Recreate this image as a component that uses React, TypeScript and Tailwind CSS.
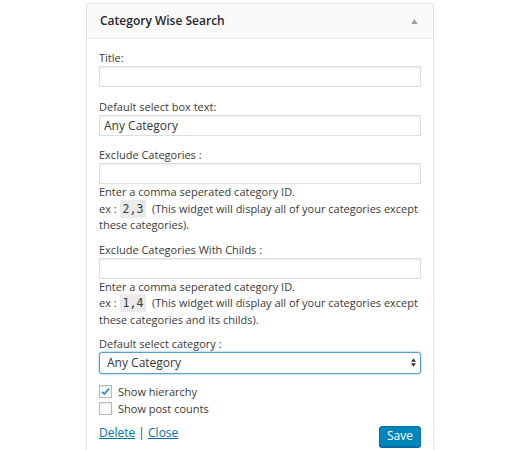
import { useState } from "react";

const font = { fontFamily: '"Open Sans", "Noto Sans", sans-serif' };

function Field({ label, value }: { label: string; value?: string }) {
  return (
    <div>
      <label className="block leading-[17px]">{label}</label>
      <input
        type="text"
        defaultValue={value}
        className="block w-full h-[21px] border border-[#ddd] bg-white px-[4px] text-[12px] text-[#32373c] shadow-[inset_0_1px_2px_rgba(0,0,0,0.07)] outline-none"
      />
    </div>
  );
}

function Help({ example, tail }: { example: string; tail: string }) {
  return (
    <p className="leading-[16.5px]">
      Enter a comma seperated category ID.
      <br />
      ex :{" "}
      <code className="bg-[#eaeaea] px-[3px] py-[2px] leading-none text-[11.5px] font-['DejaVu_Sans_Mono',monospace]">{example}</code>
      &nbsp; (This widget will display all of your categories except {tail}
    </p>
  );
}

function Checkbox({ checked, onChange, label }: { checked: boolean; onChange: () => void; label: string }) {
  return (
    <label className="flex items-center gap-[6px] leading-[17px] cursor-pointer" onClick={onChange}>
      <span className="flex items-center justify-center w-[13px] h-[13px] border border-[#b4b9be] bg-white shadow-[inset_0_1px_2px_rgba(0,0,0,0.1)]">
        {checked && (
          <svg viewBox="0 0 12 12" className="w-[11px] h-[11px]">
            <path d="M2.2 6.4 L4.8 8.8 L9.8 2.8" fill="none" stroke="#1e8cbe" strokeWidth="1.9" />
          </svg>
        )}
      </span>
      {label}
    </label>
  );
}

export default function App() {
  const [hierarchy, setHierarchy] = useState(true);
  const [counts, setCounts] = useState(false);

  return (
    <div className="min-h-[450px] bg-white pt-[3px]" style={font}>
      <div className="mx-auto w-[348px] border border-[#e5e5e5] bg-white shadow-[0_1px_1px_rgba(0,0,0,0.04)] text-[11px] leading-[16.5px] text-[#3a3a3a]">
        {/* Header */}
        <div className="flex items-center justify-between h-[35px] px-[13px] bg-[#fafafa] border-b border-[#eee]">
          <span className="text-[12px] font-semibold text-[#23282d]">Category Wise Search</span>
          <svg viewBox="0 0 8 6" className="w-[7px] h-[5px] mr-[2px]">
            <path d="M0 6 L4 0 L8 6 Z" fill="#a0a5aa" />
          </svg>
        </div>

        {/* Form */}
        <div className="px-[12px] pt-[10px] pb-[12px]">
          <Field label="Title:" />
          <div className="mt-[11px]">
            <Field label="Default select box text:" value="Any Category" />
          </div>
          <div className="mt-[10px]">
            <Field label="Exclude Categories :" />
            <Help example="2,3" tail="these categories)." />
          </div>
          <div className="mt-[7px]">
            <Field label="Exclude Categories With Childs :" />
            <Help example="1,4" tail="these categories and its childs)." />
          </div>
          <div className="mt-[7px]">
            <label className="block leading-[17px]">Default select category :</label>
            <div className="relative">
              <select className="block w-full h-[22px] appearance-none rounded-[3px] border border-[#5b9dd9] bg-white pl-[7px] text-[12px] text-[#32373c] shadow-[0_0_2px_rgba(30,140,190,0.8)] outline-none">
                <option>Any Category</option>
              </select>
              <svg viewBox="0 0 6 10" className="absolute right-[5px] top-[6px] w-[5px] h-[9px] pointer-events-none">
                <path d="M0 4 L3 0 L6 4 Z M0 6 L3 10 L6 6 Z" fill="#32373c" />
              </svg>
            </div>
          </div>

          <div className="mt-[9px] flex flex-col">
            <Checkbox checked={hierarchy} onChange={() => setHierarchy((v) => !v)} label="Show hierarchy" />
            <Checkbox checked={counts} onChange={() => setCounts((v) => !v)} label="Show post counts" />
          </div>

          {/* Actions */}
          <div className="mt-[7px] flex items-start justify-between">
            <span className="leading-[17px] text-[12px]">
              <a href="#" className="text-[#0073aa] underline">Delete</a>
              <span className="text-[#444]"> | </span>
              <a href="#" className="text-[#0073aa] underline">Close</a>
            </span>
            <button className="mt-[2px] h-[21px] px-[7px] rounded-[3px] border border-[#0073aa] bg-[#0085ba] text-[12px] text-white shadow-[0_1px_0_#006799]">
              Save
            </button>
          </div>
        </div>
      </div>
    </div>
  );
}
